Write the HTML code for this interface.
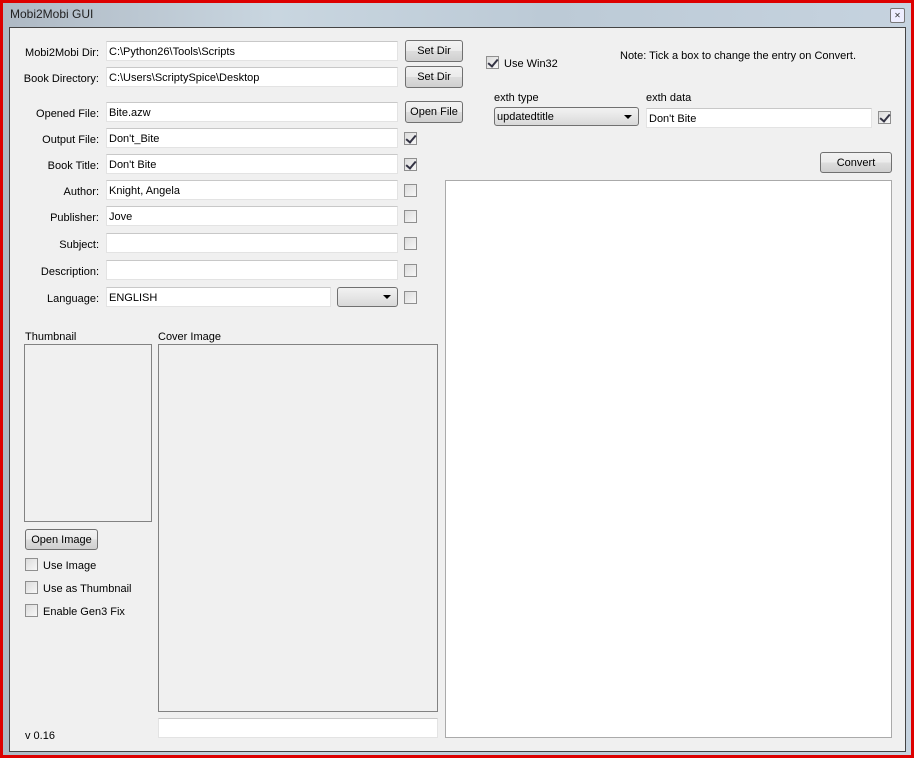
<!DOCTYPE html>
<html><head><style>
*{box-sizing:border-box;margin:0;padding:0}
body{width:914px;height:758px;background:#d00;position:relative;overflow:hidden;font-family:"Liberation Sans",sans-serif;font-size:11px;line-height:13px;color:#000}
.frame{position:absolute;left:3px;top:3px;width:908px;height:752px;background:linear-gradient(90deg,#aeb9c4,#c9d6e0 30%,#bccad6 60%,#c6d3df);}
.client{position:absolute;left:9px;top:27px;width:897px;height:725px;background:#f0f0f0;border:1px solid #444}
.t{position:absolute;white-space:nowrap;padding-top:3px}
.lbl{position:absolute;width:92px;text-align:right;left:7px;white-space:nowrap;padding-top:3px}
.in{position:absolute;background:#fff;border:1px solid #e3e3e3;border-top-color:#c8c8c8;height:20px;padding:4px 0 0 2px;white-space:nowrap}
.btn{position:absolute;border:1px solid #707070;border-radius:3px;background:linear-gradient(#f2f2f2,#ebebeb 50%,#dddddd 51%,#cfcfcf);text-align:center;padding-top:4px;height:22px}
.cb{position:absolute;width:13px;height:13px;border:1px solid #8f8f8f;background:linear-gradient(135deg,#dcdcdc,#f7f7f7)}
.cb.c::after{content:"";position:absolute;left:3px;top:0px;width:4px;height:8px;border:solid #334;border-width:0 2px 2px 0;transform:rotate(40deg)}
.box{position:absolute;border:1px solid #828282}
.sel{position:absolute;border:1px solid #707070;border-radius:3px;background:linear-gradient(#f2f2f2,#e6e6e6 50%,#d8d8d8);padding:3px 0 0 2px}
.sel::after{content:"";position:absolute;right:6px;top:7px;border:4px solid transparent;border-top:4px solid #000;border-bottom:0}
</style></head><body>
<div class="frame"></div>
<div class="t" style="left:10px;top:5px;font-size:12px;color:#222">Mobi2Mobi GUI</div>
<div style="position:absolute;left:890px;top:8px;width:15px;height:15px;border:1px solid #777;border-radius:2px;background:#eef;font-size:8px;text-align:center;line-height:13px;color:#333">✕</div>
<div class="client"></div>

<div class="lbl" style="top:44px">Mobi2Mobi Dir:</div>
<div class="in" style="left:106px;top:41px;width:292px">C:\Python26\Tools\Scripts</div>
<div class="btn" style="left:405px;top:40px;width:58px">Set Dir</div>
<div class="lbl" style="top:70px">Book Directory:</div>
<div class="in" style="left:106px;top:67px;width:292px">C:\Users\ScriptySpice\Desktop</div>
<div class="btn" style="left:405px;top:66px;width:58px">Set Dir</div>

<div class="lbl" style="top:105px">Opened File:</div>
<div class="in" style="left:106px;top:102px;width:292px">Bite.azw</div>
<div class="btn" style="left:405px;top:101px;width:58px">Open File</div>

<div class="lbl" style="top:131px">Output File:</div>
<div class="in" style="left:106px;top:128px;width:292px">Don't_Bite</div>
<div class="cb c" style="left:404px;top:132px"></div>
<div class="lbl" style="top:157px">Book Title:</div>
<div class="in" style="left:106px;top:154px;width:292px">Don't Bite</div>
<div class="cb c" style="left:404px;top:158px"></div>
<div class="lbl" style="top:183px">Author:</div>
<div class="in" style="left:106px;top:180px;width:292px">Knight, Angela</div>
<div class="cb" style="left:404px;top:184px"></div>
<div class="lbl" style="top:209px">Publisher:</div>
<div class="in" style="left:106px;top:206px;width:292px">Jove</div>
<div class="cb" style="left:404px;top:210px"></div>
<div class="lbl" style="top:236px">Subject:</div>
<div class="in" style="left:106px;top:233px;width:292px"></div>
<div class="cb" style="left:404px;top:237px"></div>
<div class="lbl" style="top:263px">Description:</div>
<div class="in" style="left:106px;top:260px;width:292px"></div>
<div class="cb" style="left:404px;top:264px"></div>
<div class="lbl" style="top:290px">Language:</div>
<div class="in" style="left:106px;top:287px;width:225px">ENGLISH</div>
<div class="sel" style="left:337px;top:287px;width:61px;height:20px"></div>
<div class="cb" style="left:404px;top:291px"></div>

<div class="t" style="left:25px;top:328px">Thumbnail</div>
<div class="box" style="left:24px;top:344px;width:128px;height:178px"></div>
<div class="t" style="left:158px;top:328px">Cover Image</div>
<div class="box" style="left:158px;top:344px;width:280px;height:368px"></div>
<div class="in" style="left:158px;top:718px;width:280px;height:20px"></div>

<div class="btn" style="left:25px;top:529px;width:73px;height:21px">Open Image</div>
<div class="cb" style="left:25px;top:558px"></div><div class="t" style="left:43px;top:557px">Use Image</div>
<div class="cb" style="left:25px;top:581px"></div><div class="t" style="left:43px;top:580px">Use as Thumbnail</div>
<div class="cb" style="left:25px;top:604px"></div><div class="t" style="left:43px;top:603px">Enable Gen3 Fix</div>
<div class="t" style="left:25px;top:727px">v 0.16</div>

<div class="cb c" style="left:486px;top:56px"></div><div class="t" style="left:504px;top:55px">Use Win32</div>
<div class="t" style="left:620px;top:47px">Note: Tick a box to change the entry on Convert.</div>
<div class="t" style="left:494px;top:89px">exth type</div>
<div class="sel" style="left:494px;top:107px;width:145px;height:19px">updatedtitle</div>
<div class="t" style="left:646px;top:89px">exth data</div>
<div class="in" style="left:646px;top:108px;width:226px">Don't Bite</div>
<div class="cb c" style="left:878px;top:111px"></div>
<div class="btn" style="left:820px;top:152px;width:72px;height:21px">Convert</div>
<div class="in" style="left:445px;top:180px;width:447px;height:558px;border-color:#aaa"></div>
</body></html>
